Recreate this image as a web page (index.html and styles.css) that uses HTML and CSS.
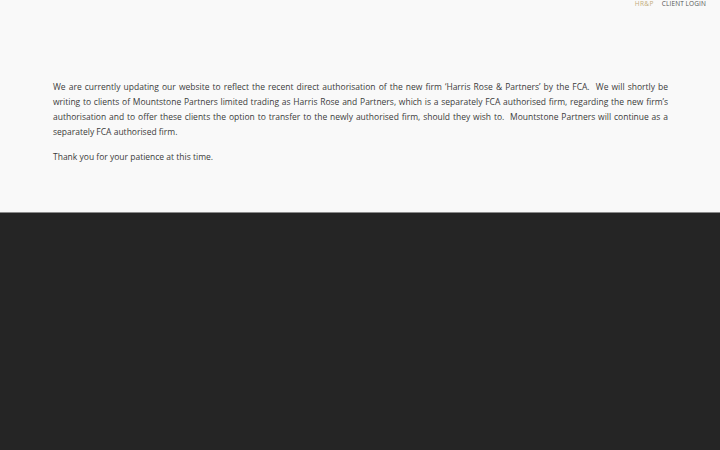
FILE: index.html
```html
<!DOCTYPE html>
<html>
<head>
<meta charset="utf-8">
<link rel="stylesheet" href="styles.css">
</head>
<body>
<header class="topbar">
  <nav class="nav">
    <a class="nav-link active" href="#">HR&amp;P</a>
    <a class="nav-link" href="#">CLIENT LOGIN</a>
  </nav>
</header>
<main class="notice">
  <p>We are currently updating our website to reflect the recent direct authorisation of the new firm ‘Harris Rose &amp; Partners’ by the FCA.&nbsp; We will shortly be writing to clients of Mountstone Partners limited trading as Harris Rose and Partners, which is a separately FCA authorised firm, regarding the new firm’s authorisation and to offer these clients the option to transfer to the newly authorised firm, should they wish to.&nbsp; Mountstone Partners will continue as a separately FCA authorised firm.</p>
  <p>Thank you for your patience at this time.</p>
</main>
<footer class="dark"></footer>
</body>
</html>
```
FILE: styles.css
```css
html, body {
  margin: 0;
  padding: 0;
  height: 100%;
}
body {
  background: #f9f9f9;
  font-family: "Open Sans", Lato, sans-serif;
  color: #3c3c3c;
  display: flex;
  flex-direction: column;
}
.topbar {
  display: flex;
  justify-content: flex-end;
  padding: 0 14px 0 0;
  height: 10px;
}
.nav {
  display: flex;
  gap: 8px;
}
.nav-link {
  font-size: 6.5px;
  letter-spacing: 0.1px;
  color: #555;
  text-decoration: none;
  line-height: 8px;
}
.nav-link.active {
  color: #c4ad7c;
  letter-spacing: 0.4px;
}
.notice {
  padding: 69px 52px 0 53px;
  height: 133px;
  box-sizing: content-box;
}
.notice p {
  margin: 0 0 10px 0;
  font-size: 8.5px;
  line-height: 15px;
  text-align: justify;
}
.dark {
  flex: 1;
  background: #252525;
  border-top: 1px solid #8a8a8a;
}
```
